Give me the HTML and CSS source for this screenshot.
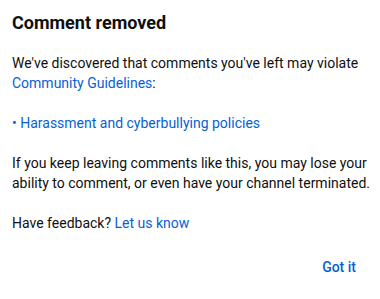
FILE: index.html
```html
<!DOCTYPE html>
<html>
<head>
<meta charset="utf-8">
<link rel="stylesheet" href="styles.css">
</head>
<body>
<div class="dialog">
  <h2 class="title">Comment removed</h2>
  <div class="content">
    <p>We've discovered that comments you've left may violate <a class="link" href="#">Community Guidelines</a>:</p>
    <p><a class="link" href="#">• Harassment and cyberbullying policies</a></p>
    <p>If you keep leaving comments like this, you may lose your ability to comment, or even have your channel terminated.</p>
    <p>Have feedback? <a class="link" href="#">Let us know</a></p>
  </div>
  <div class="actions">
    <button class="btn">Got it</button>
  </div>
</div>
</body>
</html>
```
FILE: styles.css
```css
html, body {
  margin: 0;
  padding: 0;
  background: #fff;
}
body {
  font-family: Roboto, "Liberation Sans", sans-serif;
  color: #0f0f0f;
}
.dialog {
  width: 380px;
  height: 299px;
  box-sizing: border-box;
  padding: 11px 0 0 12px;
}
.title {
  margin: 0;
  font-size: 18px;
  line-height: 24px;
  font-weight: 700;
  color: #0f0f0f;
}
.content {
  margin-top: 18px;
  font-size: 14px;
  line-height: 20px;
  width: 362px;
}
.content p {
  margin: 0 0 20px 0;
}
.content p:last-child {
  margin-bottom: 0;
}
.link {
  color: #065fd4;
  text-decoration: none;
}
.actions {
  display: flex;
  justify-content: flex-end;
  margin-top: 16px;
  padding-right: 12px;
}
.btn {
  font-family: Roboto, "Liberation Sans", sans-serif;
  font-size: 14px;
  font-weight: 500;
  line-height: 36px;
  height: 36px;
  padding: 0 12px;
  border: 0;
  background: transparent;
  color: #065fd4;
}
```
